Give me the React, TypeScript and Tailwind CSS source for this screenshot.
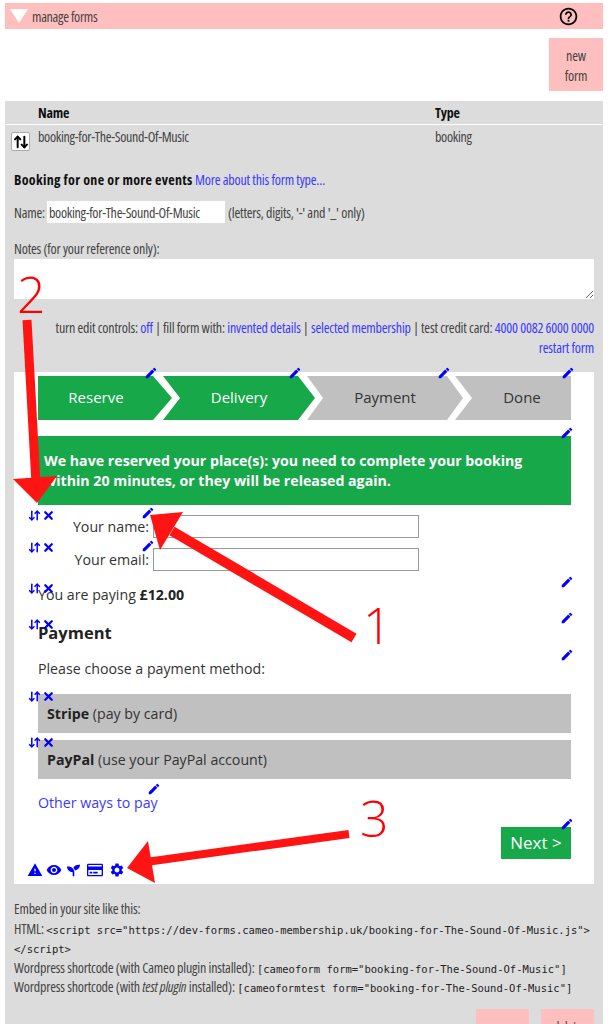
import { ArrowDownUp, ArrowUpDown, X } from "lucide-react";
import { MdEdit, MdWarning, MdHelpOutline, MdSettings, MdVisibility } from "react-icons/md";
import { FaSeedling, FaRegCreditCard } from "react-icons/fa";

const sans = "font-['Open_Sans',sans-serif]";
const link = "text-[#3a3aff]";
const mono = "font-['DejaVu_Sans_Mono',monospace] text-[10.5px] leading-none tracking-normal [font-stretch:100%] text-[#222]";

function Pencil({ className }: { className: string }) {
  return <MdEdit className={`absolute text-[14px] text-[#0000ff] ${className}`} />;
}

function RowControls({ className }: { className: string }) {
  return (
    <div className={`absolute flex items-center text-[#0000ff] ${className}`}>
      <ArrowDownUp size={13} strokeWidth={2.8} />
      <X size={13} strokeWidth={4.2} className="ml-[1px]" />
    </div>
  );
}

function Annotations() {
  return (
    <>
      <svg
        className="absolute left-0 top-0 pointer-events-none"
        width="611"
        height="1024"
        viewBox="0 0 611 1024"
        fill="#ff1414"
      >
        <path d="M27 320 L36 484" stroke="#ff1414" strokeWidth="9" />
        <path d="M13 479 L57 476 L37 503 Z" />
        <path d="M172 531 L354 638" stroke="#ff1414" strokeWidth="10" />
        <path d="M150 515 L183 512 L160 550 Z" />
        <path d="M146 862 L349 834" stroke="#ff1414" strokeWidth="8" />
        <path d="M127 868 L148 841 L155 883 Z" />
      </svg>
      <span className="absolute left-[17px] top-[260px] text-[50px] leading-[68px] text-[#ff0000] font-light pointer-events-none">2</span>
      <span className="absolute left-[363px] top-[591px] text-[50px] leading-[68px] text-[#ff0000] font-light pointer-events-none">1</span>
      <span className="absolute left-[360px] top-[784px] text-[50px] leading-[68px] text-[#ff0000] font-light pointer-events-none">3</span>
    </>
  );
}

function BookingForm() {
  return (
    <div className="mt-[14px] mx-[9px] bg-white pt-[4px] pl-[24px] pr-[23px] pb-[6px] text-[14.2px] text-[#333] flex flex-col">
      {/* steps */}
      <div className="relative flex h-[44px] text-[15px]">
        <div className="w-[134px] bg-[#17a84a] text-white flex items-center justify-center pr-[18px] pb-[2px] [clip-path:polygon(0_0,115px_0,134px_50%,115px_100%,0_100%)]">
          Reserve
        </div>
        <div className="w-[152px] -ml-[9px] bg-[#17a84a] text-white flex items-center justify-center pb-[2px] [clip-path:polygon(0_0,135px_0,152px_50%,135px_100%,0_100%,17px_50%)]">
          Delivery
        </div>
        <div className="w-[156px] -ml-[8px] bg-[#c0c0c0] flex items-center justify-center pb-[2px] [clip-path:polygon(0_0,140px_0,156px_50%,140px_100%,0_100%,16px_50%)]">
          Payment
        </div>
        <div className="w-[116px] -ml-[8px] bg-[#c0c0c0] flex items-center justify-center pl-[18px] pb-[2px] [clip-path:polygon(0_0,100%_0,100%_100%,0_100%,17px_50%)]">
          Done
        </div>
        <Pencil className="left-[106px] -top-[10px]" />
        <Pencil className="left-[250px] -top-[10px]" />
        <Pencil className="left-[399px] -top-[10px]" />
        <Pencil className="left-[523px] -top-[10px]" />
      </div>

      <div className="relative mt-[16px] h-[69px] bg-[#17a84a] text-white font-bold text-[14.2px] leading-[20px] pl-[6px] pr-[30px] pt-[15px]">
        We have reserved your place(s): you need to complete your booking within 20 minutes, or they will be released again.
        <Pencil className="-right-[3px] -top-[10px]" />
      </div>

      <div className="relative mt-[10px] flex items-center gap-[4px] h-[23px]">
        <RowControls className="-left-[10px] -top-[6px]" />
        <label className="w-[111px] text-right">Your name:</label>
        <input className="w-[266px] h-[23px] border border-[#999] bg-white" />
        <Pencil className="left-[103px] -top-[9px]" />
      </div>
      <div className="relative mt-[10px] flex items-center gap-[4px] h-[23px]">
        <RowControls className="-left-[10px] -top-[7px]" />
        <label className="w-[111px] text-right">Your email:</label>
        <input className="w-[266px] h-[23px] border border-[#999] bg-white" />
        <Pencil className="left-[103px] -top-[9px]" />
      </div>

      <div className="relative mt-[14px] leading-[20px]">
        <RowControls className="-left-[10px] -top-[3px]" />
        You are paying <b className="text-[#222]">£12.00</b>
        <Pencil className="-right-[3px] -top-[10px]" />
      </div>
      <div className="relative mt-[16px] text-[16.5px] leading-[24px] font-bold text-[#222]">
        <RowControls className="-left-[10px] -top-[3px]" />
        Payment
        <Pencil className="-right-[3px] -top-[10px]" />
      </div>
      <div className="relative mt-[14px] leading-[20px]">
        Please choose a payment method:
        <Pencil className="-right-[3px] -top-[11px]" />
      </div>

      <div className="relative mt-[15px] h-[39px] bg-[#c0c0c0] flex items-center pl-[9px]">
        <RowControls className="-left-[10px] -top-[4px]" />
        <span><b className="text-[#222]">Stripe</b> (pay by card)</span>
      </div>
      <div className="relative mt-[7px] h-[39px] bg-[#c0c0c0] flex items-center pl-[9px]">
        <RowControls className="-left-[10px] -top-[4px]" />
        <span><b className="text-[#222]">PayPal</b> (use your PayPal account)</span>
      </div>

      <div className={`relative mt-[14px] leading-[20px] w-fit ${link}`}>
        Other ways to pay
        <Pencil className="-right-[3px] -top-[11px]" />
      </div>

      <div className="relative mt-[14px] self-end">
        <button className="block w-[70px] h-[32px] bg-[#17a84a] text-white text-[17px]">Next &gt;</button>
        <Pencil className="-right-[3px] -top-[10px]" />
      </div>

      <div className="mt-[3px] -ml-[11px] flex items-center h-[16px] text-[#0000ff]">
        <MdWarning className="text-[16px]" />
        <MdVisibility className="text-[16px] ml-[3px]" />
        <FaSeedling className="text-[13px] ml-[5px]" />
        <FaRegCreditCard className="text-[16px] ml-[7px]" />
        <MdSettings className="text-[16px] ml-[6px]" />
      </div>
    </div>
  );
}

export default function App() {
  return (
    <div className={`relative w-[611px] ${sans} text-[#444]`}>
      <div className="pt-[3px] pl-[5px] pr-[8px] [font-stretch:75%] text-[14px] tracking-[-0.2px]">
        {/* section bar */}
        <div className="h-[26px] bg-[#ffbfbf] flex items-center pl-[5px] pr-[24px]">
          <span className="w-0 h-0 border-l-[9px] border-r-[9px] border-t-[14px] border-l-transparent border-r-transparent border-t-white" />
          <span className="ml-[4px] tracking-[-0.3px]">manage forms</span>
          <MdHelpOutline className="ml-auto text-[21px] text-black" />
        </div>

        <div className="flex justify-end mt-[9px]">
          <button className="w-[54px] h-[53px] bg-[#ffbfbf] pt-[3px] leading-[20px]">new<br />form</button>
        </div>

        {/* forms panel */}
        <div className="mt-[10px] bg-[#dcdcdc]">
          <div className="h-[23px] grid grid-cols-[397px_1fr] pl-[33px] items-center font-bold text-[#111] border-b border-white box-content">
            <span>Name</span>
            <span>Type</span>
          </div>
          <div className="grid grid-cols-[397px_1fr] pl-[33px] pb-[2px] relative h-[24px] items-center tracking-[-0.3px]">
            <span>booking-for-The-Sound-Of-Music</span>
            <span>booking</span>
            <button className="absolute left-[6px] top-[7px] w-[19px] h-[19px] bg-white rounded-[2px] border border-[#aaa] flex items-center justify-center text-black">
              <ArrowUpDown size={16} strokeWidth={3} />
            </button>
          </div>

          <div className="mt-[21px] pl-[9px] leading-[20px]">
            <b className="text-[#111] tracking-[0.32px]">Booking for one or more events</b> <span className={link}>More about this form type...</span>
          </div>

          <div className="mt-[11px] pl-[9px] flex items-center h-[22px]">
            <span>Name:</span>
            <input
              readOnly
              value="booking-for-The-Sound-Of-Music"
              className="ml-[2px] w-[178px] h-[22px] bg-white text-[#444] pl-[2px] tracking-[-0.3px]"
            />
            <span className="ml-[3px]">(letters, digits, '-' and '_' only)</span>
          </div>

          <div className="mt-[16px] pl-[9px] leading-[20px]">Notes (for your reference only):</div>
          <textarea className="block mx-[9px] w-[580px] h-[40px] bg-white" />

          <div className="mt-[19px] pr-[9px] text-right leading-[20px]">
            turn edit controls: <span className={link}>off</span> | fill form with: <span className={link}>invented details</span> | <span className={link}>selected membership</span> | test credit card: <span className={link}>4000 0082 6000 0000</span>
            <br />
            <span className={link}>restart form</span>
          </div>

          <div className="[font-stretch:100%] tracking-normal">
            <BookingForm />
          </div>

          <div className="mt-[15px] px-[9px] leading-[19.5px]">
            <div>Embed in your site like this:</div>
            <div>
              HTML: <code className={mono}>&lt;script src="https://dev-forms.cameo-membership.uk/booking-for-The-Sound-Of-Music.js"&gt; &lt;/script&gt;</code>
            </div>
            <div>
              Wordpress shortcode (with Cameo plugin installed): <code className={mono}>[cameoform form="booking-for-The-Sound-Of-Music"]</code>
            </div>
            <div>
              Wordpress shortcode (with <i>test plugin</i> installed): <code className={mono}>[cameoformtest form="booking-for-The-Sound-Of-Music"]</code>
            </div>
          </div>

          <div className="mt-[12px] pr-[9px] pb-[10px] flex justify-end gap-[12px]">
            <button className="w-[53px] h-[54px] bg-[#ffbfbf] pt-[3px] leading-[20px]">save<br />form</button>
            <button className="w-[53px] h-[54px] bg-[#ffbfbf] pt-[3px] leading-[20px]">delete<br />form</button>
          </div>
        </div>
      </div>
      <Annotations />
    </div>
  );
}
